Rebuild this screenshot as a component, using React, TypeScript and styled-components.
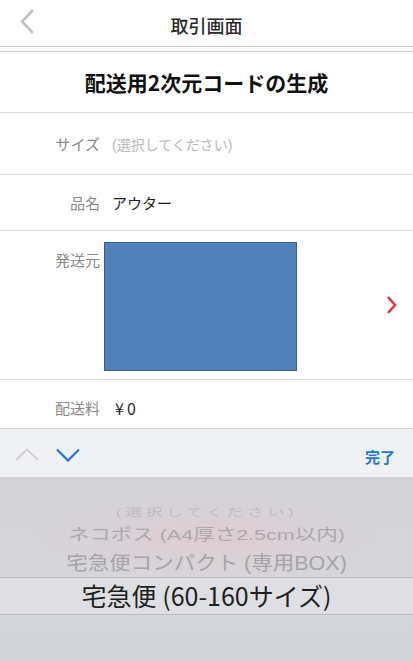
import styled, { createGlobalStyle } from "styled-components";

const GlobalStyle = createGlobalStyle`
  html, body {
    margin: 0;
    padding: 0;
    background: #ffffff;
    overflow: hidden;
  }
  body {
    font-family: "Liberation Sans", "Noto Sans CJK JP", sans-serif;
  }
`;

const PICKER_ITEMS = [
  { label: "(選択してください)", size: 17, scale: 0.6, color: "#bdbdc2", height: 20, spacing: 3.5 },
  { label: "ネコポス (A4厚さ2.5cm以内)", size: 21.5, scale: 0.72, color: "#a9a9ae", height: 24, spacing: 0 },
  { label: "宅急便コンパクト (専用BOX)", size: 21.5, scale: 0.9, color: "#a4a4a9", height: 32, spacing: 0 },
];

export default function App() {
  return (
    <Screen>
      <GlobalStyle />
      <Header>
        <BackButton>
          <svg width="16" height="28" viewBox="0 0 16 28">
            <polyline points="13,2 2,13.5 13,25" fill="none" stroke="#c2c2c2" strokeWidth="2.6" />
          </svg>
        </BackButton>
        <HeaderTitle>取引画面</HeaderTitle>
      </Header>
      <HeaderGap />
      <TitleRow>配送用2次元コードの生成</TitleRow>
      <Row height={62}>
        <Label>サイズ</Label>
        <Value muted>(選択してください)</Value>
      </Row>
      <Row height={56}>
        <Label>品名</Label>
        <Value>アウター</Value>
      </Row>
      <SenderRow>
        <Label top>発送元</Label>
        <AddressBox />
        <Arrow>
          <svg width="12" height="20" viewBox="0 0 12 20">
            <polyline points="2,2 9,10 2,18" fill="none" stroke="#e03a3e" strokeWidth="2.6" />
          </svg>
        </Arrow>
      </SenderRow>
      <Row height={48} offset={7} last>
        <Label>配送料</Label>
        <Price>¥0</Price>
      </Row>
      <Toolbar>
        <NavArrows>
          <svg width="24" height="14" viewBox="0 0 24 14">
            <polyline points="1,12 12,1.5 23,12" fill="none" stroke="#d0d0d4" strokeWidth="1.8" />
          </svg>
          <svg width="24" height="14" viewBox="0 0 24 14">
            <polyline points="1,1.5 12,12.5 23,1.5" fill="none" stroke="#1d74e0" strokeWidth="2.2" />
          </svg>
        </NavArrows>
        <DoneButton>完了</DoneButton>
      </Toolbar>
      <Picker>
        {PICKER_ITEMS.map((item) => (
          <PickerItem
            key={item.label}
            size={item.size}
            scale={item.scale}
            color={item.color}
            height={item.height}
            spacing={item.spacing}
          >
            <span>{item.label}</span>
          </PickerItem>
        ))}
        <SelectedItem>宅急便 (60-160サイズ)</SelectedItem>
      </Picker>
    </Screen>
  );
}

const Screen = styled.div`
  width: 413px;
  height: 661px;
  display: flex;
  flex-direction: column;
  background: #ffffff;
  overflow: hidden;
`;

const Header = styled.div`
  height: 46px;
  display: flex;
  align-items: center;
  justify-content: center;
  position: relative;
  border-bottom: 1px solid #cfcfd1;
  flex-shrink: 0;
`;

const BackButton = styled.div`
  position: absolute;
  left: 20px;
  top: 8px;
  display: flex;
`;

const HeaderTitle = styled.div`
  font-family: "Noto Sans CJK JP", sans-serif;
  font-size: 18px;
  font-weight: 500;
  color: #2b2b2b;
  margin-top: 4px;
`;

const HeaderGap = styled.div`
  height: 4px;
  background: #fafafa;
  border-bottom: 1px solid #d6d6d8;
  flex-shrink: 0;
`;

const TitleRow = styled.div`
  height: 60px;
  display: flex;
  align-items: center;
  justify-content: center;
  font-family: "Noto Sans CJK JP", sans-serif;
  font-size: 21px;
  font-weight: 700;
  color: #111111;
  border-bottom: 1px solid #d9d9db;
  flex-shrink: 0;
`;

const Row = styled.div<{ height: number; offset?: number; last?: boolean }>`
  height: ${({ height }) => height}px;
  display: flex;
  align-items: center;
  padding-top: ${({ offset }) => offset ?? 0}px;
  box-sizing: border-box;
  border-bottom: ${({ last }) => (last ? "none" : "1px solid #d9d9db")};
  flex-shrink: 0;
`;

const Label = styled.div<{ top?: boolean }>`
  width: 100px;
  text-align: right;
  font-family: "Noto Sans CJK JP", sans-serif;
  font-size: 15px;
  color: #8a8a8a;
  align-self: ${({ top }) => (top ? "flex-start" : "auto")};
  margin-top: ${({ top }) => (top ? "18px" : "0")};
  flex-shrink: 0;
`;

const Value = styled.div<{ muted?: boolean }>`
  margin-left: 12px;
  font-family: "Liberation Sans", "Noto Sans CJK JP", sans-serif;
  font-size: ${({ muted }) => (muted ? "14px" : "15px")};
  color: ${({ muted }) => (muted ? "#b8b8b8" : "#1e1e1e")};
`;

const Price = styled.div`
  margin-left: 15px;
  font-family: "Noto Sans CJK JP", sans-serif;
  font-size: 16px;
  letter-spacing: 3px;
  color: #2a2a2a;
`;

const SenderRow = styled.div`
  height: 148px;
  display: flex;
  align-items: center;
  border-bottom: 1px solid #d9d9db;
  flex-shrink: 0;
`;

const AddressBox = styled.div`
  align-self: flex-start;
  margin-top: 11px;
  margin-left: 4px;
  width: 191px;
  height: 127px;
  background: #4f81bd;
  border: 1px solid #3a5f8c;
`;

const Arrow = styled.div`
  margin-left: auto;
  margin-right: 15px;
  display: flex;
`;

const Toolbar = styled.div`
  height: 48px;
  display: flex;
  align-items: center;
  justify-content: space-between;
  padding: 0 18px 0 15px;
  background: #f0f1f3;
  border-top: 1px solid #cfd0d3;
  flex-shrink: 0;
`;

const NavArrows = styled.div`
  display: flex;
  gap: 17px;
  align-items: center;
  margin-top: 4px;
`;

const DoneButton = styled.div`
  font-family: "Noto Sans CJK JP", sans-serif;
  font-size: 15px;
  font-weight: 700;
  color: #1b7ae0;
  margin-top: 6px;
`;

const Picker = styled.div`
  flex: 1;
  display: flex;
  flex-direction: column;
  padding-top: 24px;
  background:
    radial-gradient(ellipse 190px 50px at 206px 62px, rgba(240, 190, 195, 0.35), rgba(240, 190, 195, 0) 100%),
    linear-gradient(#d3d3d8, #d6d7dc 60%, #d2d4da);
`;

const PickerItem = styled.div<{ size: number; scale: number; color: string; height: number; spacing: number }>`
  height: ${({ height }) => height}px;
  display: flex;
  align-items: center;
  justify-content: center;
  font-family: "Liberation Sans", "Noto Sans CJK JP", sans-serif;
  font-size: ${({ size }) => size}px;
  letter-spacing: ${({ spacing }) => spacing}px;
  color: ${({ color }) => color};
  white-space: nowrap;

  span {
    display: inline-block;
    transform: scaleY(${({ scale }) => scale});
  }
`;

const SelectedItem = styled.div`
  height: 38px;
  display: flex;
  align-items: center;
  justify-content: center;
  padding-bottom: 3px;
  box-sizing: border-box;
  font-family: "Noto Sans CJK JP", sans-serif;
  font-size: 25px;
  color: #1f1f1f;
  background: rgba(255, 255, 255, 0.22);
  border-top: 1px solid #b9b9be;
  border-bottom: 1px solid #b9b9be;
`;
